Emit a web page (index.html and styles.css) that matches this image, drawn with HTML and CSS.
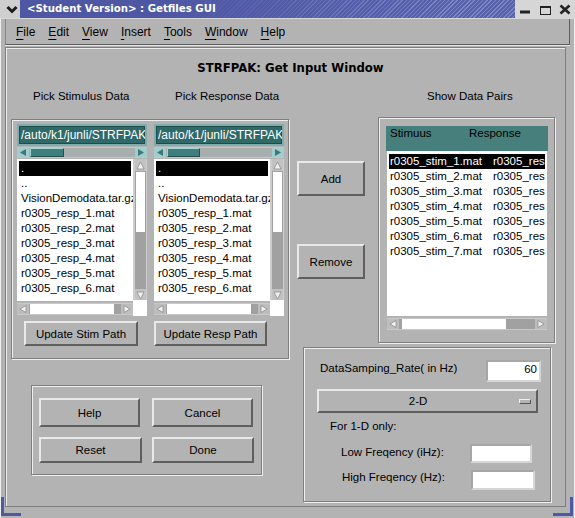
FILE: index.html
```html
<!DOCTYPE html>
<html lang="en">
<head>
<meta charset="utf-8">
<title>Getfiles GUI</title>
<link rel="stylesheet" href="styles.css">
</head>
<body>
<div class="win">
  <div class="titlebar">
    <div class="tb-menu"><svg width="20" height="18" viewBox="0 0 20 18"><path d="M7.5 7 L12 11.5 L16.5 7" fill="none" stroke="#1c1c1c" stroke-width="3"/></svg></div>
    <div class="tb-title">&lt;Student Version&gt; : Getfiles GUI</div>
    <div class="tb-btns">
      <span class="tb-btn"><svg width="20" height="18" viewBox="0 0 20 18"><rect x="5" y="10.5" width="10" height="3" fill="#222"/></svg></span>
      <span class="tb-btn"><svg width="20" height="18" viewBox="0 0 20 18"><rect x="5.5" y="6.5" width="10" height="8" fill="none" stroke="#222"/><rect x="5" y="6" width="11" height="2" fill="#222"/></svg></span>
      <span class="tb-btn"><svg width="20" height="18" viewBox="0 0 20 18"><path d="M5.5 5.5 L14.5 13.5 M14.5 5.5 L5.5 13.5" stroke="#222" stroke-width="2.6"/></svg></span>
    </div>
  </div>
  <div class="frame">
    <div class="menubar">
      <span><u>F</u>ile</span>
      <span><u>E</u>dit</span>
      <span><u>V</u>iew</span>
      <span><u>I</u>nsert</span>
      <span><u>T</u>ools</span>
      <span><u>W</u>indow</span>
      <span><u>H</u>elp</span>
    </div>
    <div class="main">
      <h1 class="heading">STRFPAK: Get Input Window</h1>
      <div class="grid">
        <div class="lbl-l"><span>Pick Stimulus Data</span><span>Pick Response Data</span></div>
        <div class="lbl-r">Show Data Pairs</div>

        <div class="files etched">
          <div class="fcol">
            <div class="tfield">/auto/k1/junli/STRFPAK</div>
            <div class="hs teal">
              <span class="arr"><svg width="12" height="9" viewBox="0 0 12 9"><path d="M9 1 L9 8 L3 4.5 Z" fill="#3b7878"/></svg></span>
              <span class="track"><span class="thumb t-stim"></span></span>
              <span class="arr"><svg width="12" height="9" viewBox="0 0 12 9"><path d="M3 1 L3 8 L9 4.5 Z" fill="#3b7878"/></svg></span>
            </div>
            <div class="lw">
              <div class="list">
                <div class="sel">.</div>
                <div>..</div>
                <div>VisionDemodata.tar.gz</div>
                <div>r0305_resp_1.mat</div>
                <div>r0305_resp_2.mat</div>
                <div>r0305_resp_3.mat</div>
                <div>r0305_resp_4.mat</div>
                <div>r0305_resp_5.mat</div>
                <div>r0305_resp_6.mat</div>
              </div>
              <div class="vs">
                <span class="varr"><svg width="11" height="11" viewBox="0 0 11 11"><path d="M5.5 2 L9 9 L2 9 Z" fill="#f2f2f2" stroke="#8c8c8c" stroke-width="0.8"/></svg></span>
                <span class="vthumb"></span>
                <span class="vtrack"></span>
                <span class="varr"><svg width="11" height="11" viewBox="0 0 11 11"><path d="M5.5 9 L9 2 L2 2 Z" fill="#f2f2f2" stroke="#8c8c8c" stroke-width="0.8"/></svg></span>
              </div>
              <div class="hs grey">
                <span class="arr"><svg width="12" height="10" viewBox="0 0 12 10"><path d="M9 1.5 L9 8.5 L3 5 Z" fill="#f2f2f2" stroke="#8c8c8c" stroke-width="0.8"/></svg></span>
                <span class="track"><span class="thumb g-list"></span></span>
                <span class="arr"><svg width="12" height="10" viewBox="0 0 12 10"><path d="M3 1.5 L3 8.5 L9 5 Z" fill="#f2f2f2" stroke="#8c8c8c" stroke-width="0.8"/></svg></span>
              </div>
              <div class="sq"></div>
            </div>
            <div class="btn ubtn u-stim">Update Stim Path</div>
          </div>
          <div class="fcol">
            <div class="tfield">/auto/k1/junli/STRFPAK</div>
            <div class="hs teal">
              <span class="arr"><svg width="12" height="9" viewBox="0 0 12 9"><path d="M9 1 L9 8 L3 4.5 Z" fill="#3b7878"/></svg></span>
              <span class="track"><span class="thumb t-resp"></span></span>
              <span class="arr"><svg width="12" height="9" viewBox="0 0 12 9"><path d="M3 1 L3 8 L9 4.5 Z" fill="#3b7878"/></svg></span>
            </div>
            <div class="lw lw-resp">
              <div class="list">
                <div class="sel">.</div>
                <div>..</div>
                <div>VisionDemodata.tar.gz</div>
                <div>r0305_resp_1.mat</div>
                <div>r0305_resp_2.mat</div>
                <div>r0305_resp_3.mat</div>
                <div>r0305_resp_4.mat</div>
                <div>r0305_resp_5.mat</div>
                <div>r0305_resp_6.mat</div>
              </div>
              <div class="vs">
                <span class="varr"><svg width="11" height="11" viewBox="0 0 11 11"><path d="M5.5 2 L9 9 L2 9 Z" fill="#f2f2f2" stroke="#8c8c8c" stroke-width="0.8"/></svg></span>
                <span class="vthumb"></span>
                <span class="vtrack"></span>
                <span class="varr"><svg width="11" height="11" viewBox="0 0 11 11"><path d="M5.5 9 L9 2 L2 2 Z" fill="#f2f2f2" stroke="#8c8c8c" stroke-width="0.8"/></svg></span>
              </div>
              <div class="hs grey">
                <span class="arr"><svg width="12" height="10" viewBox="0 0 12 10"><path d="M9 1.5 L9 8.5 L3 5 Z" fill="#f2f2f2" stroke="#8c8c8c" stroke-width="0.8"/></svg></span>
                <span class="track"><span class="thumb g-list"></span></span>
                <span class="arr"><svg width="12" height="10" viewBox="0 0 12 10"><path d="M3 1.5 L3 8.5 L9 5 Z" fill="#f2f2f2" stroke="#8c8c8c" stroke-width="0.8"/></svg></span>
              </div>
              <div class="sq"></div>
            </div>
            <div class="btn ubtn u-resp">Update Resp Path</div>
          </div>
        </div>

        <div class="addrm">
          <div class="btn b-add">Add</div>
          <div class="btn b-rm">Remove</div>
        </div>

        <div class="pairs etched">
          <div class="phead"><span>Stimuus</span><span>Response</span></div>
          <div class="plist">
            <div class="prow sel"><span>r0305_stim_1.mat</span><span>r0305_resp_1.mat</span></div>
            <div class="prow"><span>r0305_stim_2.mat</span><span>r0305_resp_2.mat</span></div>
            <div class="prow"><span>r0305_stim_3.mat</span><span>r0305_resp_3.mat</span></div>
            <div class="prow"><span>r0305_stim_4.mat</span><span>r0305_resp_4.mat</span></div>
            <div class="prow"><span>r0305_stim_5.mat</span><span>r0305_resp_5.mat</span></div>
            <div class="prow"><span>r0305_stim_6.mat</span><span>r0305_resp_6.mat</span></div>
            <div class="prow"><span>r0305_stim_7.mat</span><span>r0305_resp_7.mat</span></div>
          </div>
          <div class="hs grey phs">
            <span class="arr"><svg width="12" height="10" viewBox="0 0 12 10"><path d="M9 1.5 L9 8.5 L3 5 Z" fill="#f2f2f2" stroke="#8c8c8c" stroke-width="0.8"/></svg></span>
            <span class="track"><span class="thumb g-pairs"></span></span>
            <span class="arr"><svg width="12" height="10" viewBox="0 0 12 10"><path d="M3 1.5 L3 8.5 L9 5 Z" fill="#f2f2f2" stroke="#8c8c8c" stroke-width="0.8"/></svg></span>
          </div>
        </div>

        <div class="params etched">
          <div class="prm-row r1">
            <span class="plabel">DataSamping_Rate( in Hz)</span>
            <span class="inp inp-rate">60</span>
          </div>
          <div class="btn popup"><span class="ptxt">2-D</span><span class="pind"></span></div>
          <div class="only">For 1-D only:</div>
          <div class="prm-row r-low">
            <span class="plabel fl-low">Low Freqency (iHz):</span>
            <span class="inp inp-low"></span>
          </div>
          <div class="prm-row r-high">
            <span class="plabel fl-high">High Freqency (Hz):</span>
            <span class="inp inp-high"></span>
          </div>
        </div>

        <div class="btnbox etched">
          <div class="brow">
            <div class="btn b-help">Help</div>
            <div class="btn b-cancel">Cancel</div>
          </div>
          <div class="brow brow2">
            <div class="btn b-reset">Reset</div>
            <div class="btn b-done">Done</div>
          </div>
        </div>
      </div>
    </div>
  </div>
  <span class="corner bl"></span>
  <span class="corner br"></span>
</div>
</body>
</html>
```

FILE: styles.css
```css
*{box-sizing:border-box;margin:0;padding:0}
html,body{width:575px;height:518px;overflow:hidden;background:#b3b3b3}
body{font-family:"Liberation Sans",Arial,sans-serif;font-size:11.5px;color:#000}
.win{position:relative;width:575px;height:518px;background:#b3b3b3}

/* title bar */
.titlebar{display:flex;height:18px}
.tb-menu{width:20px;background:#cfcfcf;display:flex}
.tb-title{flex:1;color:#fff;font:bold 10.2px/18px "DejaVu Sans",sans-serif;padding-left:7px;white-space:nowrap;overflow:hidden;
  background:linear-gradient(90deg,#4d57a4 0,#4d57a4 30%,rgba(77,87,164,0) 85%),repeating-linear-gradient(135deg,#7b86c7 0 1px,#5862ab 1px 3px)}
.tb-btns{width:60px;display:flex;background:#d6d6d6}
.tb-btn{width:20px;display:flex}

/* frame */
.frame{height:500px;border-left:1px solid #efefef;border-right:1px solid #efefef;border-top:1px solid #d8d8d8;padding:0 4px}
.menubar{height:26px;display:flex;align-items:center;gap:13px;padding-left:10px;font-size:12px;
  border-left:1px solid #868686;border-right:1px solid #5e5e5e;border-bottom:1px solid #5e5e5e;box-shadow:0 1px 0 #e4e4e4}
.menubar u{text-decoration-thickness:1px;text-underline-offset:3px}
.main{margin-top:2px;margin-right:4px;height:460px;border:1px solid #7e7e7e;box-shadow:inset 1px 1px 0 #ececec}
.heading{margin-top:10px;font:bold 11.7px/20px "DejaVu Sans",sans-serif;text-align:center;padding-left:10px}

.etched{border:1px solid #7f7f7f;box-shadow:inset 1px 1px 0 #efefef,1px 1px 0 #efefef}

.grid{display:grid;margin-top:11px;margin-left:5px;grid-template-columns:278px 8px 68px 13px 177px;grid-template-rows:14px 14px 230px 12px 26px 90px 27px}
.lbl-l{grid-area:1/1/2/2;display:flex;line-height:14px;white-space:nowrap}
.lbl-l span:first-child{margin-left:22px;width:142px}
.lbl-r{grid-area:1/5/2/6;padding-left:49px;line-height:14px;white-space:nowrap}

/* file pickers */
.files{grid-area:3/1/5/2;margin-top:2px;display:flex;gap:7px;padding:4px 0 0 5px}
.fcol{width:130px;display:flex;flex-direction:column}
.tfield{height:22px;border:2px solid #7fadab;background:#2f6a69;box-shadow:inset 0 0 0 1px #1f4c4b;color:#fff;font-size:12px;line-height:18px;padding-left:2px;white-space:nowrap;overflow:hidden}
.hs{display:flex;height:11px;margin-top:1px}
.hs .track{flex:1;display:flex}
.hs .arr{width:12px;display:flex;align-items:center}
.hs.teal{background:#a6aeae;border-top:1px solid #a8d2d2;border-bottom:1px solid #a8d2d2}
.hs.teal .arr{background:#a3cdcd}
.hs.teal .thumb{background:#3f7e7e;border-top:1px solid #a3d3d3;border-left:1px solid #a3d3d3;border-bottom:1px solid #255050;border-right:1px solid #255050;margin-left:1px}
.t-stim{width:34px}
.t-resp{width:33px}
.hs.grey{background:#a1a1a1;height:12px;margin-top:2px;border-top:1px solid #c9c9c9;border-bottom:1px solid #c9c9c9}
.hs.grey .arr{background:#bdbdbd}
.hs.grey .thumb{background:#fff;margin-left:1px}
.g-list{width:84px}
.g-pairs{width:104px;margin-left:3px!important}

.lw{margin-top:1px;display:grid;grid-template-columns:116px 14px;grid-template-rows:142px 15px}
.list{background:#fff;padding-top:2px;overflow:hidden;white-space:nowrap;line-height:15px}
.list div{padding-left:4px}
.list .sel{background:#000;color:#fff;margin:0 2px;padding-left:2px}
.vs{display:flex;flex-direction:column;background:#a1a1a1;border-left:2px solid #cdcdcd;border-right:1px solid #cdcdcd}
.varr{height:12px;background:#c2c2c2;display:flex;justify-content:center;align-items:center}
.vthumb{height:60px;background:#fff;margin:1px 1px 0 1px}
.vtrack{flex:1}
.sq{background:#fff;margin-top:-1px}

.btn{display:flex;align-items:center;justify-content:center;background:#b3b3b3;border:2px solid;border-color:#e9e9e9 #5f5f5f #5f5f5f #e9e9e9;white-space:nowrap}
.ubtn{margin-top:5px;height:25px}
.u-stim{margin-left:7px;width:114px}
.u-resp{width:113px}

/* add/remove */
.addrm{grid-area:3/3/4/4}
.b-add{margin-top:44px;height:35px}
.b-rm{margin-top:48px;height:35px}

/* pairs */
.pairs{grid-area:3/5/4/6;height:226px;padding:8px 0 0 7px}
.phead{width:162px;height:25px;background:#477f7c;display:flex;padding-left:4px;line-height:15px;white-space:nowrap}
.phead span:first-child{width:79px}
.plist{margin-left:1px;width:160px;height:165px;background:#fff;padding-top:3px;overflow:hidden;line-height:15px}
.prow{display:flex;margin:0 2px;padding-left:1px;white-space:nowrap;overflow:hidden}
.prow span:first-child{width:103px;flex:none}
.prow.sel{background:#000;color:#fff}
.phs{margin-left:1px;width:160px;margin-top:1px}

/* params */
.params{grid-area:4/3/8/6;margin-left:6px;width:248px;padding-top:12px}
.prm-row{display:flex;align-items:flex-start}
.r1{padding-left:16px;height:22px}
.r1 .plabel{line-height:16px}
.inp{background:#fff;border:2px solid;border-color:#a6a6a6 #d6d6d6 #d6d6d6 #a6a6a6;text-align:right;padding-right:2px;line-height:14px}
.inp-rate{margin-left:auto;margin-right:9px;width:55px;height:22px}
.popup{margin-top:7px;margin-left:13px;width:221px;height:24px;justify-content:flex-start}
.ptxt{flex:1;text-align:center}
.pind{width:12px;height:5px;margin:0 5px 0 2px;background:#b3b3b3;border:1px solid;border-color:#efefef #555 #555 #efefef}
.only{margin-top:6px;padding-left:26px;line-height:14px}
.r-low{margin-top:11px}
.fl-low{width:166px;padding-left:37px;line-height:16px}
.inp-low{width:62px;height:19px}
.r-high{margin-top:7px}
.fl-high{width:167px;padding-left:38px;line-height:14px}
.inp-high{width:64px;height:20px}

/* buttons box */
.btnbox{grid-area:6/1/7/2;margin-left:20px;width:231px;padding:12px 0 0 7px}
.brow{display:flex}
.b-help{width:101px;height:29px}
.b-cancel{width:101px;height:29px;margin-left:12px}
.brow2{margin-top:10px}
.b-reset{width:103px;height:26px}
.b-done{width:102px;height:26px;margin-left:10px}

/* resize corner highlights */
.corner{position:absolute;top:497px;width:20px;height:19px;border-color:#4f58a6;border-style:solid}
.corner.bl{left:1px;border-width:0 0 3px 3px}
.corner.br{right:2px;border-width:0 3px 3px 0}
```
